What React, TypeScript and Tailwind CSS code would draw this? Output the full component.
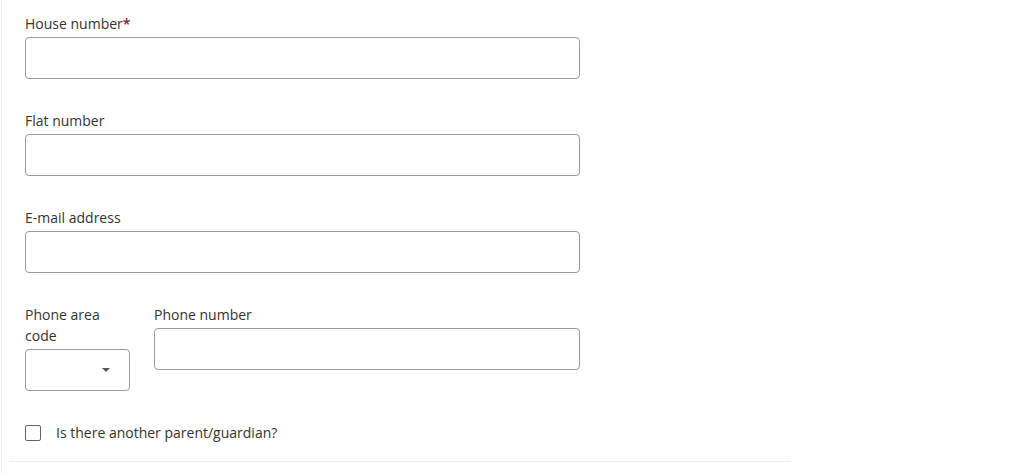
export default function App() {
  const fields = [
    { label: "House number", required: true },
    { label: "Flat number", required: false },
    { label: "E-mail address", required: false },
  ];

  return (
    <div className="h-[473px] w-[1024px] overflow-hidden bg-white font-['Open_Sans',sans-serif] text-[14px] text-[#333]">
      <div className="ml-px h-full border-l border-[#f2f2f2]">
        <div className="ml-[7px] w-[782px] border-b border-[#ececec] pb-[18px]">
          <div className="w-[571px] pl-4 pt-[13px]">
            {fields.map((f, i) => (
              <div key={f.label} className={i > 0 ? "mt-[31px]" : ""}>
                <label className="block leading-[21px]">
                  {f.label}
                  {f.required && <span className="font-semibold text-[#8b1538]">*</span>}
                </label>
                <input
                  type="text"
                  className="mt-[3px] block h-[42px] w-[555px] rounded-[4px] border border-[#9a9a9a] bg-white px-3"
                />
              </div>
            ))}

            <div className="mt-[31px] flex gap-6">
              <div className="w-[105px] shrink-0">
                <label className="block w-[80px] leading-[21px]">Phone area code</label>
                <div className="mt-[3px] flex h-[42px] w-[105px] items-center justify-end rounded-[4px] border border-[#9a9a9a] pr-[19px]">
                  <span className="h-0 w-0 border-x-[4px] border-t-[4px] border-x-transparent border-t-[#555]" />
                </div>
              </div>
              <div className="flex-1">
                <label className="block leading-[21px]">Phone number</label>
                <input
                  type="text"
                  className="mt-[3px] block h-[42px] w-full rounded-[4px] border border-[#9a9a9a] bg-white px-3"
                />
              </div>
            </div>

            <div className="mt-[31px] flex items-center gap-[15px]">
              <span className="block h-[16px] w-[16px] rounded-[2px] border-[1.5px] border-[#666]" />
              <span className="leading-[21px]">Is there another parent/guardian?</span>
            </div>
          </div>
        </div>
      </div>
    </div>
  );
}
